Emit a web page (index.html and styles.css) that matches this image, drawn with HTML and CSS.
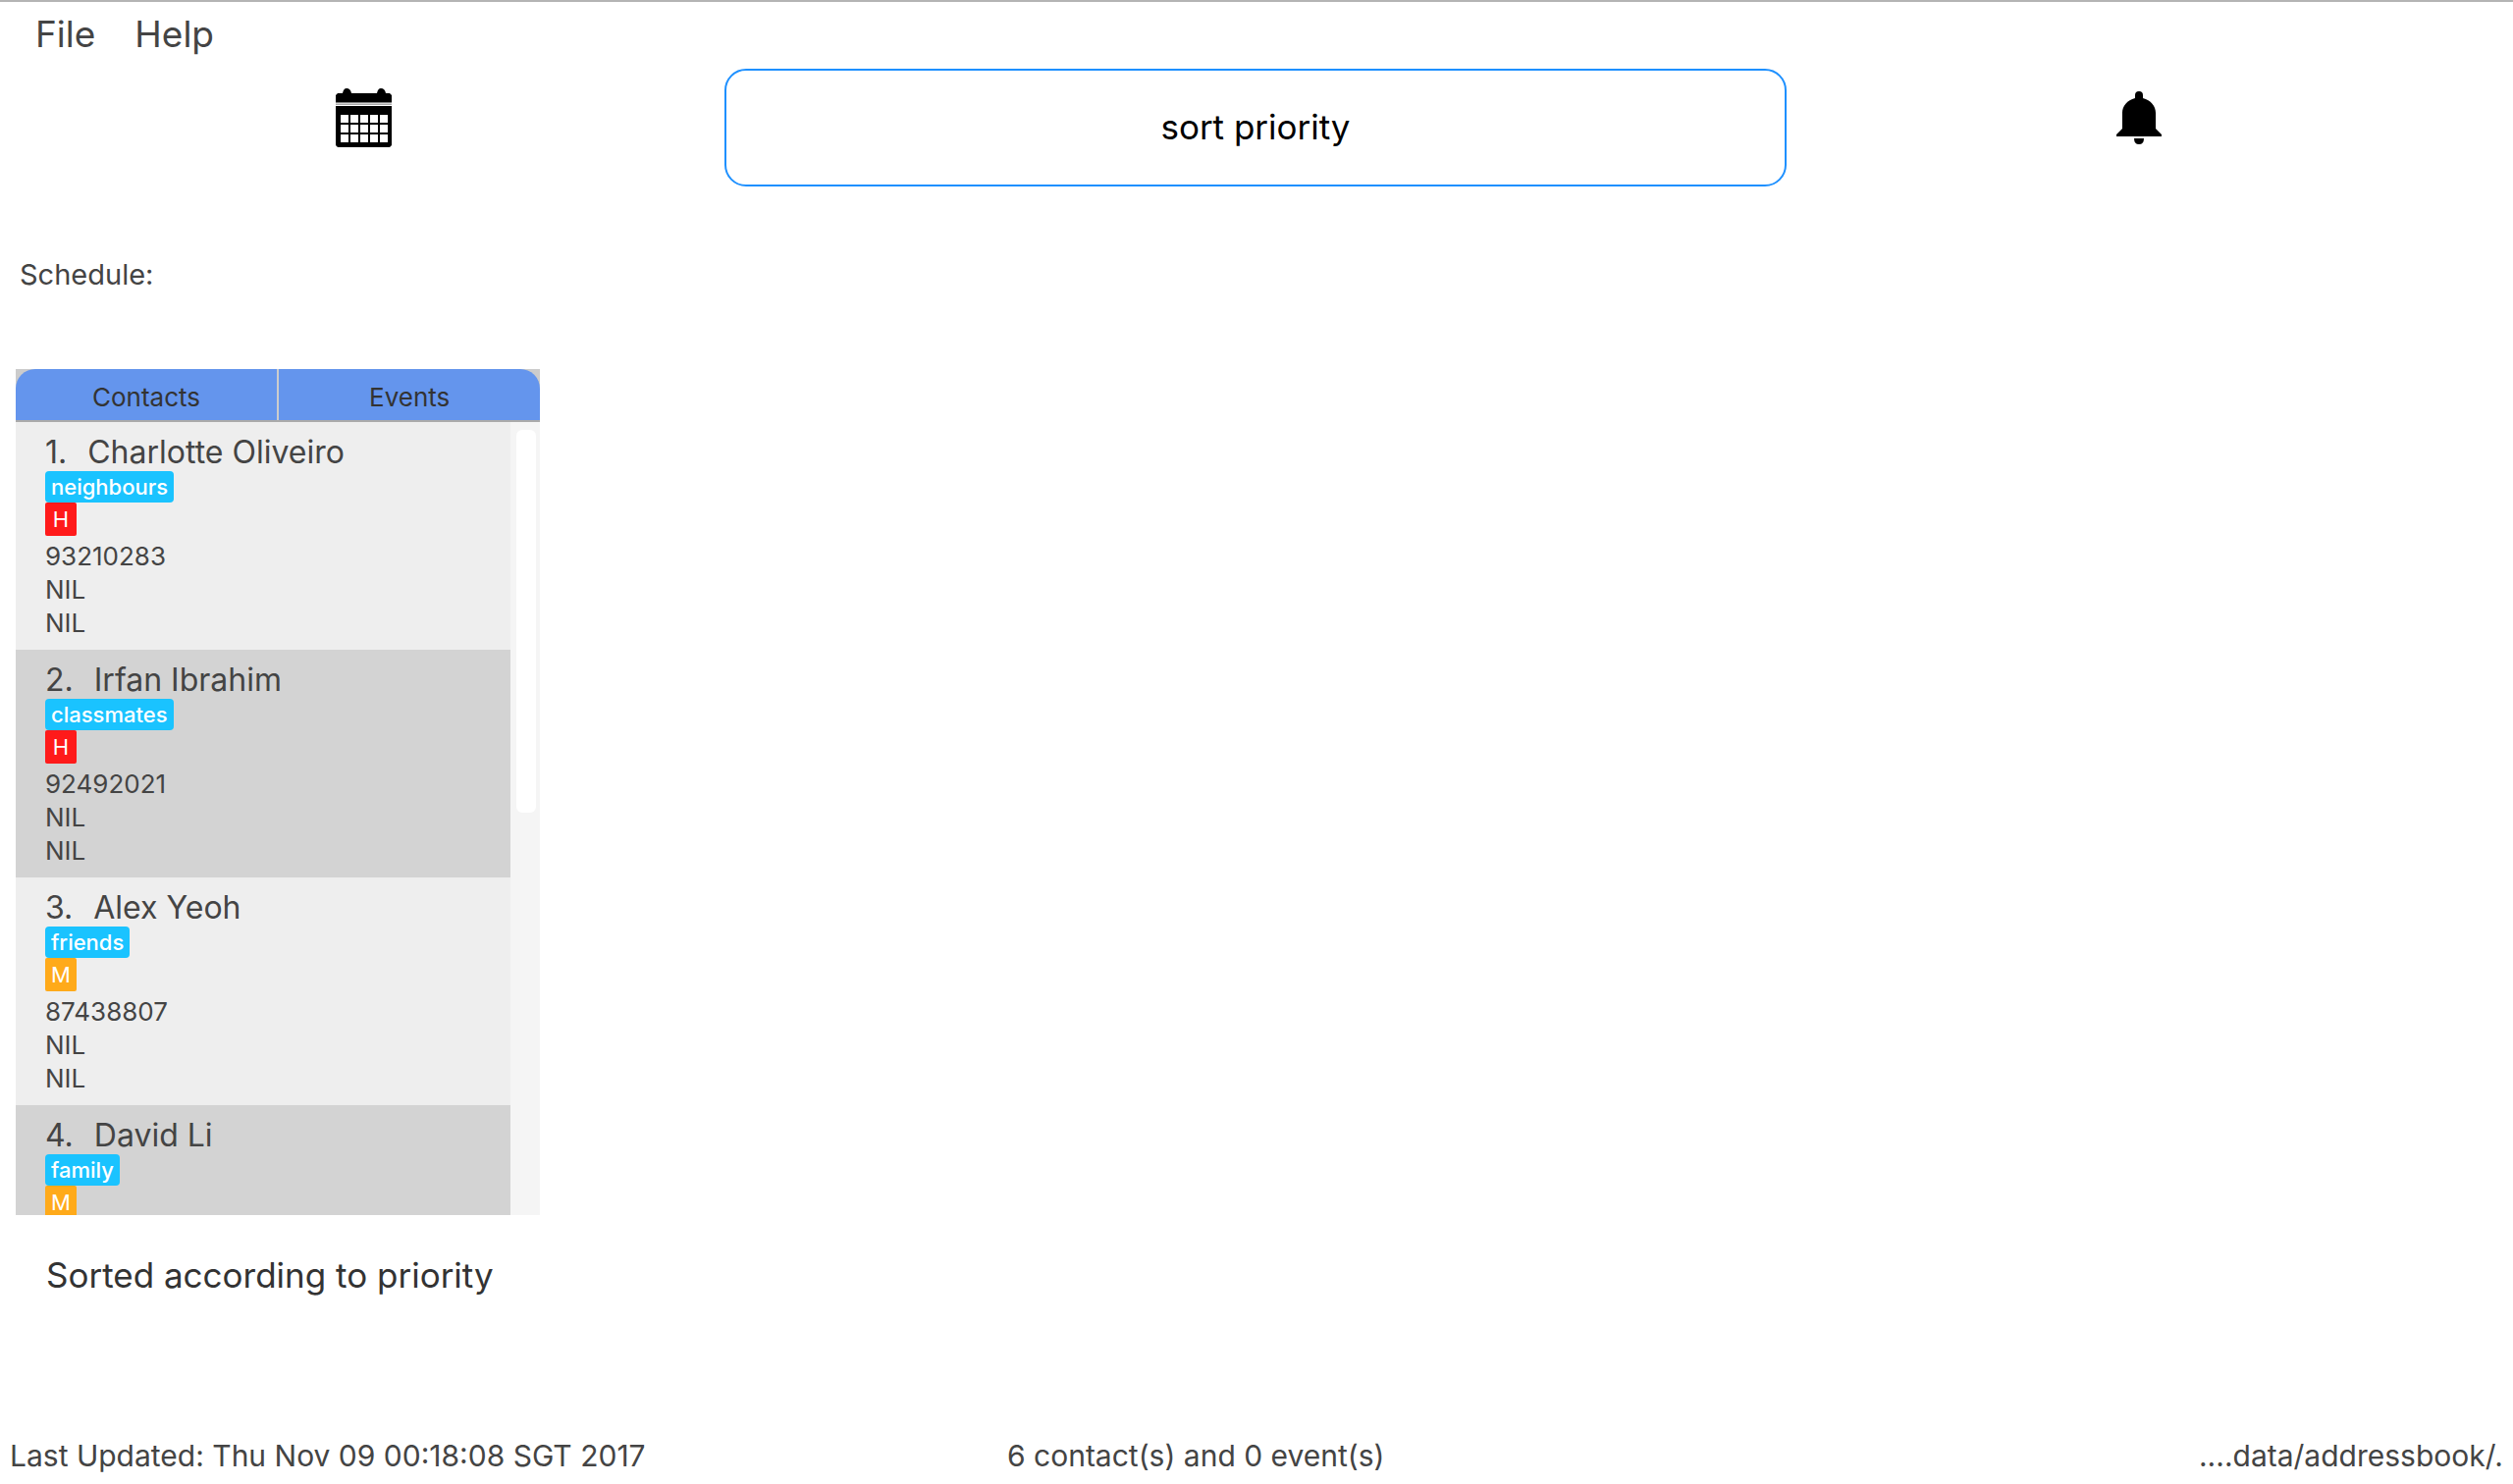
FILE: index.html
```html
<!DOCTYPE html>
<html lang="en">
<head>
<meta charset="utf-8">
<title>Address Book</title>
<link rel="stylesheet" href="styles.css">
</head>
<body>
<nav class="menubar">
  <button type="button" class="menu">File</button>
  <button type="button" class="menu">Help</button>
</nav>
<header class="toolbar">
  <button type="button" class="icon-button calendar" aria-label="Calendar">
    <svg width="57" height="60" viewBox="0 0 57 60" aria-hidden="true">
      <path d="M2 5H7Q8 0 11 0Q15 0 16 5H42Q43 0 46 0Q50 0 51 5H55L57 7V14.500H0V7Z"/>
      <path d="M0 15.500H57V17H0Z" fill="#aaa"/>
      <path fill-rule="evenodd" d="M0 18H57V58L55 60H2L0 58ZM5 27V35H13V27ZM15 27V35H23V27ZM25 27V35H33V27ZM35 27V35H43V27ZM45 27V35H53V27ZM5 37V45H13V37ZM15 37V45H23V37ZM25 37V45H33V37ZM35 37V45H43V37ZM45 37V45H53V37ZM5 47V55H13V47ZM15 47V55H23V47ZM25 47V55H33V47ZM35 47V55H43V47ZM45 47V55H53V47Z"/>
    </svg>
  </button>
  <input class="command" type="text" value="sort priority" aria-label="Command">
  <button type="button" class="icon-button bell" aria-label="Reminders">
    <svg width="46" height="60" viewBox="0 0 46 60" aria-hidden="true">
      <path d="M19 10V7Q19 3 23 3Q27 3 27 7V10C35 12 40 18 40 25V41L46 47V49H0V47L6 41V25C6 18 11 12 19 10Z"/>
      <path d="M18 51H28Q28 57 23 57Q18 57 18 51Z"/>
    </svg>
  </button>
</header>
<main class="content">
  <h1 class="schedule">Schedule:</h1>
  <section class="panel">
    <div class="tabs" role="tablist">
      <button type="button" class="tab" role="tab" aria-selected="true">Contacts</button>
      <button type="button" class="tab" role="tab" aria-selected="false">Events</button>
    </div>
    <div class="list-area">
      <ul class="contacts">
        <li class="contact">
          <h2 class="name"><span>1.</span><span>Charlotte Oliveiro</span></h2>
          <span class="tag">neighbours</span>
          <span class="priority high">H</span>
          <p class="detail phone">93210283</p>
          <p class="detail">NIL</p>
          <p class="detail">NIL</p>
        </li>
        <li class="contact">
          <h2 class="name"><span>2.</span><span>Irfan Ibrahim</span></h2>
          <span class="tag">classmates</span>
          <span class="priority high">H</span>
          <p class="detail phone">92492021</p>
          <p class="detail">NIL</p>
          <p class="detail">NIL</p>
        </li>
        <li class="contact">
          <h2 class="name"><span>3.</span><span>Alex Yeoh</span></h2>
          <span class="tag">friends</span>
          <span class="priority medium">M</span>
          <p class="detail phone">87438807</p>
          <p class="detail">NIL</p>
          <p class="detail">NIL</p>
        </li>
        <li class="contact">
          <h2 class="name"><span>4.</span><span>David Li</span></h2>
          <span class="tag">family</span>
          <span class="priority medium">M</span>
        </li>
      </ul>
      <div class="scrollbar"><div class="thumb"></div></div>
    </div>
  </section>
  <p class="result">Sorted according to priority</p>
</main>
<footer class="status">
  <span>Last Updated: Thu Nov 09 00:18:08 SGT 2017</span>
  <span>6 contact(s) and 0 event(s)</span>
  <span>....data/addressbook/.</span>
</footer>
</body>
</html>
```
FILE: styles.css
```css
* {
  box-sizing: border-box;
}

body {
  margin: 0;
  height: 100vh;
  display: flex;
  flex-direction: column;
  border-top: 2px solid #b4b4b4;
  background: #fff;
  color: #444;
  font-family: Inter, "Liberation Sans", sans-serif;
}

h1, h2, p, ul {
  margin: 0;
  padding: 0;
  font-weight: 400;
}

button {
  margin: 0;
  padding: 0;
  border: 0;
  background: none;
  color: inherit;
  font: inherit;
}

.menubar {
  display: flex;
  align-items: flex-start;
  gap: 40px;
  height: 68px;
  padding: 11px 0 0 36px;
}

.menu {
  font-size: 37px;
  line-height: 44px;
}

.toolbar {
  display: grid;
  grid-template-columns: 738fr 1082fr 740fr;
  align-items: start;
}

.icon-button {
  justify-self: center;
  padding-top: 20px;
}

.icon-button svg {
  display: block;
}

.calendar {
  padding-left: 3px;
}

.bell {
  padding-right: 22px;
}

.command {
  width: 100%;
  height: 120px;
  padding: 0 2px 2px;
  border: 2px solid #1e90ff;
  border-radius: 22px;
  background: #fff;
  color: #000;
  font: inherit;
  font-size: 35px;
  text-align: center;
  outline: none;
}

.content {
  flex: 1;
  min-height: 0;
  display: flex;
  flex-direction: column;
  width: 22%;
  padding: 0 13px 0 16px;
}

.schedule {
  padding: 72px 4px 78px;
  font-size: 29px;
  line-height: 36px;
}

.panel {
  flex: 1;
  min-height: 0;
  display: flex;
  flex-direction: column;
  background: #ccc;
}

.tabs {
  display: grid;
  grid-template-columns: 1fr 1fr;
  gap: 2px;
  height: 54px;
  border-bottom: 2px solid #aaa;
}

.tab {
  padding-top: 4px;
  background: #6495ed;
  color: #333;
  font-size: 26px;
}

.tab:first-child {
  border-top-left-radius: 20px;
}

.tab:last-child {
  border-top-right-radius: 20px;
}

.list-area {
  flex: 1;
  min-height: 0;
  display: flex;
}

.contacts {
  flex: 1;
  overflow: hidden;
  list-style: none;
}

.contact {
  display: flex;
  flex-direction: column;
  align-items: flex-start;
  padding: 11px 30px 10px;
  background: #eee;
}

.contact:nth-child(even) {
  background: #d3d3d3;
}

.name {
  display: flex;
  gap: 21px;
  font-size: 32px;
  line-height: 39px;
}

.tag {
  padding: 0 6px;
  border-radius: 4px;
  background: #1ac3ff;
  color: #fff;
  font-size: 22px;
  font-weight: 500;
  line-height: 32px;
}

.priority {
  width: 32px;
  padding-top: 1px;
  border-radius: 2px;
  color: #fff;
  font-size: 22px;
  line-height: 33px;
  text-align: center;
}

.high {
  background: #ff1a1a;
}

.medium {
  background: #ffaa1a;
}

.detail {
  font-size: 26px;
  line-height: 34px;
}

.phone {
  margin-top: 4px;
}

.scrollbar {
  width: 30px;
  padding: 8px 4px 8px 6px;
  background: #f5f5f5;
}

.thumb {
  height: 49%;
  min-height: 390px;
  border-radius: 6px;
  background: #fff;
}

.result {
  height: 216px;
  padding: 39px 0 0 31px;
  color: #333;
  font-size: 35px;
  line-height: 44px;
  white-space: nowrap;
}

.status {
  display: grid;
  grid-template-columns: 40% 1fr auto;
  align-items: center;
  height: 58px;
  padding: 0 10px;
  font-size: 30px;
}
```
